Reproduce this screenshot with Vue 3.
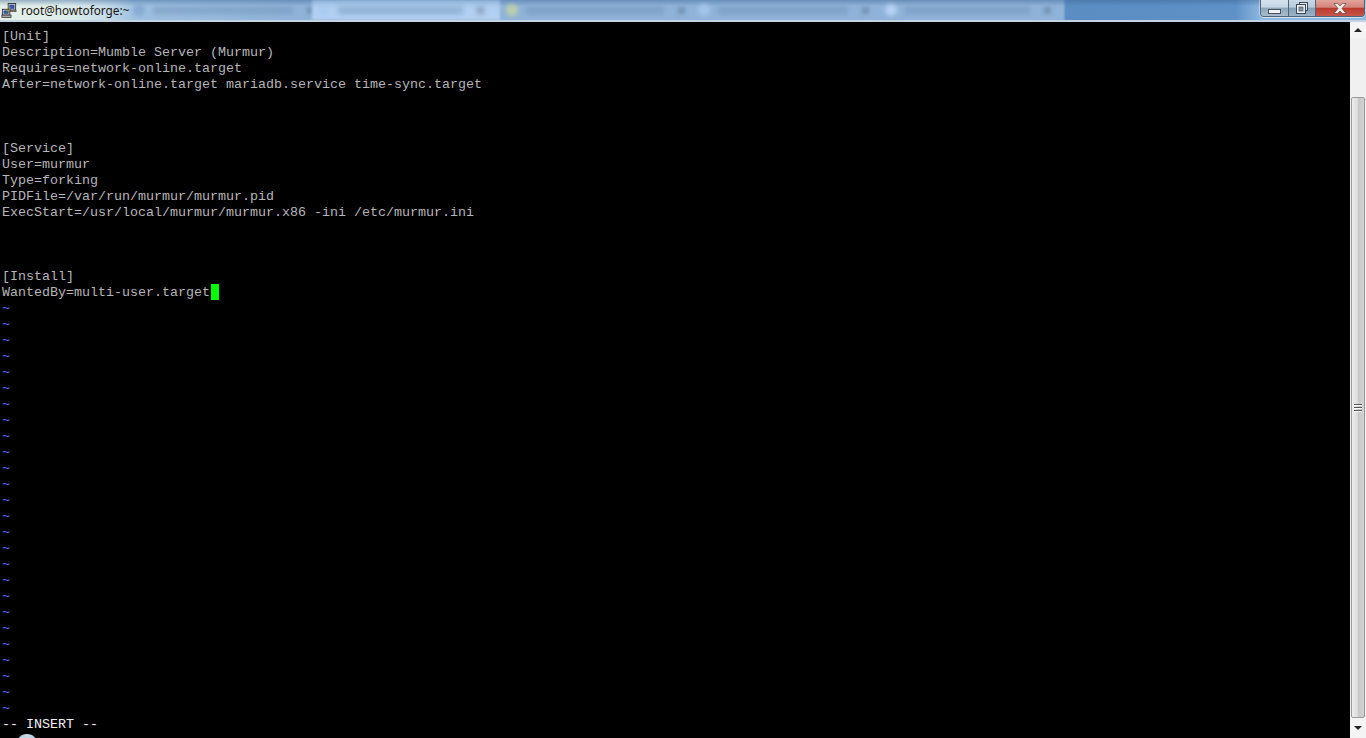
<script setup>
const lines = [
  '[Unit]',
  'Description=Mumble Server (Murmur)',
  'Requires=network-online.target',
  'After=network-online.target mariadb.service time-sync.target',
  '', '', '',
  '[Service]',
  'User=murmur',
  'Type=forking',
  'PIDFile=/var/run/murmur/murmur.pid',
  'ExecStart=/usr/local/murmur/murmur.x86 -ini /etc/murmur.ini',
  '', '', '',
  '[Install]'
]
const tildes = Array.from({ length: 26 }, (_, i) => i)
const tabs = [
  { w: 185, cls: 'tab', bar: 140, icon: '#7fa4d0' },
  { w: 188, cls: 'tab light', bar: 125, icon: '#a8c8f0' },
  { w: 192, cls: 'tab', bar: 138, icon: '#c8d6a0' },
  { w: 187, cls: 'tab', bar: 130, icon: '#a8c8f0' },
  { w: 184, cls: 'tab', bar: 125, icon: '#c0d8fa' }
]
</script>

<template>
  <div class="screen">
    <header class="titlebar">
      <svg class="putty" width="16" height="15" viewBox="0 0 19 18">
        <rect x="8.5" y="0.5" width="9" height="8" fill="#d8d8d8" stroke="#222" />
        <rect x="10" y="2" width="6" height="5" fill="#2a4fb0" />
        <rect x="9" y="8.5" width="9" height="2" fill="#9a9a9a" stroke="#222" stroke-width="0.6" />
        <rect x="1.5" y="7.5" width="9" height="7" fill="#d8d8d8" stroke="#222" />
        <rect x="3" y="9" width="6" height="4" fill="#2a4fb0" />
        <rect x="1" y="14.5" width="11" height="3" fill="#a8a8a8" stroke="#222" stroke-width="0.8" />
        <path d="M14 3 L9.5 7 L11 8 L5 12 L10 9.6 L8.8 8.6 Z" fill="#f6e81e" stroke="#6b6200" stroke-width="0.5" />
      </svg>
      <span class="title">root@howtoforge:~</span>
      <div class="tabs">
        <div v-for="(t, i) in tabs" :key="i" :class="t.cls" :style="{ width: t.w + 'px' }">
          <i class="fav" :style="{ background: t.icon }"></i>
          <i class="bar" :style="{ width: t.bar + 'px' }"></i>
          <i class="close-dot"></i>
        </div>
      </div>
      <div class="controls">
        <div class="ctl min"><i class="min-glyph"></i></div>
        <div class="ctl max">
          <svg width="12" height="12" viewBox="0 0 12 12">
            <rect x="3.5" y="0.5" width="8" height="8" fill="#dfe6ec" stroke="#3c4a58" />
            <rect x="0.5" y="2.5" width="9" height="9" fill="#e8edf2" stroke="#3c4a58" />
            <rect x="3" y="5" width="4" height="4" fill="#7f95a8" stroke="#3c4a58" stroke-width="0.6" />
          </svg>
        </div>
        <div class="ctl close">
          <svg width="14" height="11" viewBox="0 0 14 11">
            <path d="M1 0.5 H4.6 L7 3 L9.4 0.5 H13 L9 5.5 L13 10.5 H9.4 L7 8 L4.6 10.5 H1 L5 5.5 Z" fill="#f0ebe8" stroke="#5a4a48" stroke-width="0.7" />
          </svg>
        </div>
      </div>
    </header>
    <div class="window">
      <main class="terminal">
        <div v-for="(l, i) in lines" :key="i" class="line">{{ l }}</div>
        <div class="line">WantedBy=multi-user.target<span class="cursor"></span></div>
        <div v-for="t in tildes" :key="'t' + t" class="line tilde">~</div>
        <div class="line mode">-- INSERT --</div>
      </main>
      <aside class="scrollbar">
        <div class="btn up"><i class="arrow-up"></i></div>
        <div class="track">
          <div class="thumb">
            <div class="grip"><i></i><i></i><i></i></div>
          </div>
        </div>
        <div class="btn down"><i class="arrow-down"></i></div>
      </aside>
    </div>
    <div class="orb"></div>
  </div>
</template>

<style>
html, body { margin: 0; background: #000; overflow: hidden; }
</style>

<style scoped>
.screen {
  position: relative;
  width: 1366px;
  height: 738px;
  overflow: hidden;
  background: #000;
  display: flex;
  flex-direction: column;
}
.titlebar {
  height: 20px;
  flex: none;
  display: flex;
  align-items: flex-start;
  border-bottom: 2px solid #c3d3e2;
  background:
    linear-gradient(180deg, rgba(60, 100, 150, .45) 0, rgba(60, 100, 150, 0) 6px),
    linear-gradient(90deg, #e6f0ea 0, #dcecea 70px, #c6dcea 105px, #9dc0e0 135px, #8fb3d8 300px, #8fb3d8 1063px, #5b8cc2 1066px, #5f90c6 1235px, #8db8e0 1262px);
}
.putty { margin: 3px 4px 0 1px; flex: none; }
.title {
  width: 106px;
  flex: none;
  font: 11.8px/20px "Noto Sans", sans-serif;
  color: #1c1410;
  white-space: nowrap;
}
.tabs {
  display: flex;
  flex: none;
  height: 20px;
  width: 936px;
  margin-right: 197px;
  overflow: hidden;
}
.tab {
  flex: none;
  display: flex;
  align-items: center;
  height: 20px;
  padding-left: 6px;
  gap: 8px;
  box-sizing: border-box;
}
.tab.light { background: linear-gradient(180deg, #8fb3d8 0, #b0cff0 7px, #b4d1f2 100%); filter: blur(1.5px); }
.fav { flex: none; width: 12px; height: 12px; border-radius: 50%; opacity: .8; filter: blur(2px); }
.bar { flex: none; height: 7px; background: #6f92b8; opacity: .55; filter: blur(2.5px); }
.close-dot { flex: none; width: 7px; height: 7px; margin-left: 6px; background: #55708e; opacity: .5; filter: blur(2px); }
.controls {
  display: flex;
  flex: none;
  height: 17px;
  box-sizing: border-box;
  border: 1px solid #4e6478;
  border-top: 0;
  border-radius: 0 0 4px 4px;
  overflow: hidden;
  box-shadow: 0 1px 0 rgba(255, 255, 255, .6), -1px 0 0 rgba(255, 255, 255, .4), 1px 0 0 rgba(255, 255, 255, .4);
}
.ctl { display: flex; align-items: center; justify-content: center; height: 16px; }
.min { width: 27px; border-right: 1px solid #4e6478; background: linear-gradient(180deg, #d6e3ee 0, #c4d5e3 45%, #8fa6ba 50%, #a8bccd 100%); align-items: flex-end; }
.min-glyph { display: block; width: 11px; height: 3px; margin-bottom: 2px; background: #f0f2f4; border: 1px solid #44525f; }
.max { width: 26px; border-right: 1px solid #4e6478; background: linear-gradient(180deg, #c8d8e4 0, #b8cbda 45%, #87a0b5 50%, #9cb3c6 100%); }
.close { width: 48px; background: linear-gradient(180deg, #e2a49c 0, #d2847a 45%, #b93a2c 52%, #c8564a 100%); }
.window {
  flex: 1;
  min-height: 0;
  display: flex;
}
.terminal {
  flex: 1;
  min-width: 0;
  padding: 7px 0 0 2px;
  font: 13.33px/16px "Liberation Mono", monospace;
  color: #b6b6b6;
  background: #000;
}
.line { height: 16px; white-space: pre; }
.cursor {
  display: inline-block;
  width: 8px;
  height: 16px;
  margin: -1px 0 0 1px;
  vertical-align: top;
  background: #00ff00;
}
.tilde { color: #6a6aff; }
.mode { color: #f0f0f0; }
.scrollbar {
  width: 16px;
  margin-left: 1px;
  flex: none;
  display: flex;
  flex-direction: column;
  background: #f0f0f0;
}
.btn {
  flex: none;
  height: 20px;
  display: flex;
  align-items: center;
  justify-content: center;
  background: #f4f4f4;
}
.up { height: 16px; }
.arrow-up { display: block; width: 0; height: 0; border: 4px solid transparent; border-top: 0; border-bottom: 4px solid #222; }
.arrow-down { display: block; width: 0; height: 0; border: 4px solid transparent; border-bottom: 0; border-top: 4px solid #222; }
.track { flex: 1; min-height: 0; padding-top: 59px; display: flex; flex-direction: column; }
.thumb {
  flex: 1;
  margin: 0 1px;
  box-sizing: border-box;
  border: 1px solid #9a9a9a;
  border-radius: 2px;
  background: linear-gradient(90deg, #eeeeee 0, #dcdcdc 45%, #c8c8c8 55%, #d2d2d2 100%);
  display: flex;
  align-items: center;
  justify-content: center;
}
.grip { display: flex; flex-direction: column; gap: 1px; margin-top: 0; }
.grip i { display: block; width: 8px; height: 2px; background: linear-gradient(180deg, #555 50%, #fff 50%); }
.orb {
  position: absolute;
  left: 16px;
  top: 734px;
  width: 22px;
  height: 22px;
  border-radius: 50%;
  background: radial-gradient(circle at 50% 0, #d4e0e8 0, #a8c4d8 40%, #6f9cc0 100%);
}
</style>
